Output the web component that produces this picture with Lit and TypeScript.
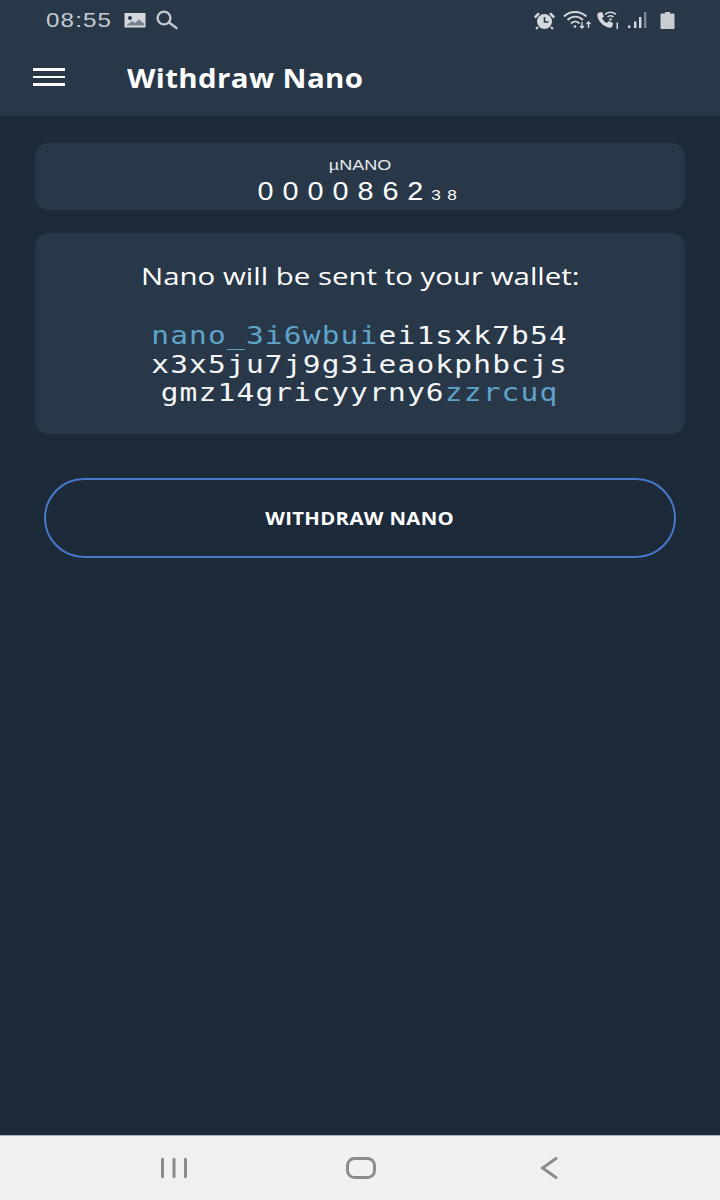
import { LitElement, html, css, svg } from 'lit'
import { customElement } from 'lit/decorators.js'

const imageIcon = svg`<svg width="22" height="15" viewBox="0 0 22 15"><rect width="21" height="14.500" x=".5" fill="#d5d8dc"/><circle cx="6" cy="5" r="2" fill="#2a3a4c"/><path d="M2 12.500 8 8l3 2 4-3.500 5 4v2z" fill="#2a3a4c" opacity=".55"/></svg>`
const searchIcon = svg`<svg width="24" height="20" viewBox="0 0 24 20" fill="none" stroke="#c4cad1" stroke-width="2.400"><circle cx="9" cy="8" r="6.400"/><path d="m14 12.500 7.500 5.500" stroke-linecap="round"/></svg>`
const alarmIcon = svg`<svg width="23" height="19" viewBox="0 0 23 19"><circle cx="11.500" cy="10.500" r="7.500" fill="#d5d8dc"/><path d="M1 5.500 5 1.500 7 3 2.500 7.500zM22 5.500 18 1.500 16 3l4.500 4.500z" fill="#d5d8dc"/><path d="M11.500 6v5h4" fill="none" stroke="#2a3a4c" stroke-width="1.600"/><path d="m5 16-2 2M18 16l2 2" stroke="#d5d8dc" stroke-width="2"/></svg>`
const wifiIcon = svg`<svg width="29" height="18" viewBox="0 0 29 18" fill="none" stroke="#d5d8dc" stroke-width="1.800"><path d="M1 5.500C7-.5 17-.5 23.500 5.500M4.500 9C9 4.500 15.500 4.500 20 9M8 12.500c2.500-2.500 6-2.500 8.500 0"/><circle cx="12" cy="15.500" r="1.300" fill="#d5d8dc" stroke="none"/><path d="M19 11v6m-2-2 2 2 2-2M25.500 17v-6m-2 2 2-2 2 2" stroke-width="1.400"/></svg>`
const callIcon = svg`<svg width="24" height="19" viewBox="0 0 24 19"><path d="M3 1.500 6 1l2 4.500-2 1.500c1 2.500 2.500 4 5 5l1.500-2 4.500 2-.5 3c-.5 1.500-2 2-4 1.500C7 15 2.500 10.500 1.500 5.500 1 3.500 1.500 2 3 1.500z" fill="#d5d8dc"/><path d="M9 3.500c3-3 8-3 11 0M11.500 6c1.500-1.500 4-1.500 6 0" fill="none" stroke="#d5d8dc" stroke-width="1.600"/><circle cx="14.500" cy="8.500" r="1.200" fill="#d5d8dc"/><path d="M20.500 11.500h1.500V18h-1.500z" fill="#d5d8dc"/></svg>`
const signalIcon = svg`<svg width="20" height="18" viewBox="0 0 20 18" fill="#d5d8dc"><rect x="1" y="14.500" width="2.400" height="2.500"/><rect x="7" y="10.500" width="2.400" height="6.500"/><rect x="12" y="6" width="2.400" height="11"/><rect x="17" y="1" width="2.400" height="16" opacity=".5"/></svg>`
const batteryIcon = svg`<svg width="15" height="18" viewBox="0 0 15 18"><path d="M5 1h5v1.500h3.500a1 1 0 0 1 1 1V17a1 1 0 0 1-1 1H1.500a1 1 0 0 1-1-1V3.500a1 1 0 0 1 1-1H5z" fill="#c9cdd2"/></svg>`

@customElement('app-root')
export class AppRoot extends LitElement {
  static styles = css`
    :host {
      display: flex;
      flex-direction: column;
      height: 1200px;
      background: #1c2a3a;
      color: #fff;
      font-family: "Open Sans", "Liberation Sans", sans-serif;
    }
    .header {
      height: 116px;
      background: #283849;
      box-sizing: border-box;
    }
    .status {
      height: 40px;
      display: flex;
      align-items: center;
      padding: 0 42px 2px 46px;
      color: #c4cad1;
    }
    .time {
      font: 21px "Liberation Sans", sans-serif;
      letter-spacing: 1px;
      margin-right: 11px;
      transform: scaleX(1.15);
      transform-origin: left center;
    }
    .status-left, .status-right {
      display: flex;
      align-items: center;
    }
    .status-left { gap: 9px; flex: 1; }
    .status-right { gap: 4px; }
    .status-right svg { display: block; }
    .status-right svg:first-child { margin-right: 3px; }
    .status-right svg:nth-child(3) { margin-right: 3px; }
    .battery { margin-left: 9px; }
    .toolbar {
      height: 76px;
      display: flex;
      align-items: center;
      padding: 0 33px 0;
    }
    .burger {
      width: 32px;
      display: flex;
      flex-direction: column;
      gap: 5px;
      margin-right: 62px;
      margin-bottom: 6px;
    }
    .burger span {
      height: 2.500px;
      background: #fff;
    }
    .title {
      font-size: 27px;
      font-weight: 700;
      letter-spacing: .35px;
      margin-bottom: 5px;
      transform: scaleX(1.09);
      transform-origin: left center;
    }
    .content {
      flex: 1;
      padding: 27px 35px 0;
      display: flex;
      flex-direction: column;
    }
    .card {
      background: #283849;
      border-radius: 14px;
    }
    .amount {
      height: 67px;
      margin-bottom: 23px;
      display: flex;
      flex-direction: column;
      align-items: center;
      padding-top: 14px;
      box-sizing: border-box;
    }
    .unit {
      font: 15px/16px "Liberation Sans", sans-serif;
      color: #e6e9ec;
      transform: scaleX(1.2);
    }
    .value {
      font: 25px/30px "Liberation Sans", sans-serif;
      letter-spacing: 7.800px;
      margin-top: 3px;
      transform: scaleX(1.15);
    }
    .value small {
      font-size: 15px;
      letter-spacing: 5.600px;
      margin-left: -1px;
    }
    .wallet {
      height: 201px;
      display: flex;
      flex-direction: column;
      align-items: center;
      text-align: center;
      padding-top: 27px;
      box-sizing: border-box;
      margin-bottom: 44px;
    }
    .wallet-label {
      font-size: 23px;
      line-height: 33px;
      transform: scaleX(1.28);
    }
    .address {
      margin-top: 29px;
      font: 25px/28.500px "DejaVu Sans Mono", monospace;
      letter-spacing: 1px;
      color: #f4f6f8;
      transform: scaleX(1.18);
    }
    .address b {
      font-weight: 400;
      color: #5fa3c9;
    }
    .withdraw {
      margin: 0 9px;
      height: 80px;
      box-sizing: border-box;
      border: 2px solid #4a78c8;
      border-radius: 40px;
      background: transparent;
      color: #fff;
      font-family: "Open Sans", sans-serif;
      font-size: 18px;
      font-weight: 700;
      letter-spacing: .3px;
    }
    .withdraw span {
      display: inline-block;
      transform: scaleX(1.13);
    }
    .nav {
      height: 65px;
      background: #f1f1f1;
      border-top: 1px solid #aab4c4;
      box-sizing: border-box;
      display: flex;
      align-items: center;
      padding-left: 160px;
    }
    .nav svg { display: block; margin-bottom: 1px; }
    .nav svg:nth-child(2) { margin-left: 158px; }
    .nav svg:nth-child(3) { margin-left: 164px; }
  `

  render() {
    return html`
      <div class="header">
        <div class="status">
          <div class="status-left">
            <span class="time">08:55</span>
            ${imageIcon}${searchIcon}
          </div>
          <div class="status-right">
            ${alarmIcon}${wifiIcon}${callIcon}${signalIcon}
            <span class="battery">${batteryIcon}</span>
          </div>
        </div>
        <div class="toolbar">
          <div class="burger"><span></span><span></span><span></span></div>
          <div class="title">Withdraw Nano</div>
        </div>
      </div>
      <div class="content">
        <div class="card amount">
          <div class="unit">µNANO</div>
          <div class="value">0000862<small>38</small></div>
        </div>
        <div class="card wallet">
          <div class="wallet-label">Nano will be sent to your wallet:</div>
          <div class="address">
            <div><b>nano_3i6wbui</b>ei1sxk7b54</div>
            <div>x3x5ju7j9g3ieaokphbcjs</div>
            <div>gmz14gricyyrny6<b>zzrcuq</b></div>
          </div>
        </div>
        <button class="withdraw"><span>WITHDRAW NANO</span></button>
      </div>
      <div class="nav">
        <svg width="28" height="22" viewBox="0 0 28 22" fill="#8c8c8c"><rect x="1" y="1" width="3" height="20" rx="1"/><rect x="12.500" y="1" width="3" height="20" rx="1"/><rect x="24" y="1" width="3" height="20" rx="1"/></svg>
        <svg width="30" height="22" viewBox="0 0 30 22" fill="none" stroke="#8c8c8c" stroke-width="3"><rect x="1.500" y="1.500" width="27" height="19" rx="7"/></svg>
        <svg width="18" height="22" viewBox="0 0 18 22" fill="none" stroke="#8c8c8c" stroke-width="3" stroke-linecap="round"><path d="M16 1.500 2.500 11 16 20.500"/></svg>
      </div>
    `
  }
}
